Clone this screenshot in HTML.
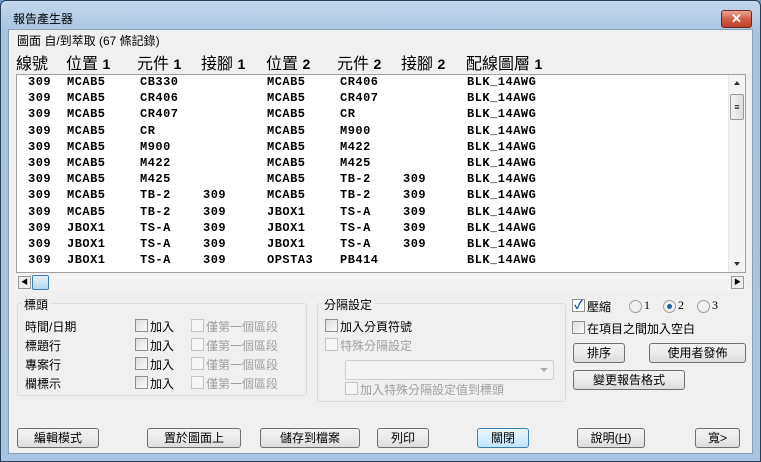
<!DOCTYPE html><html><head><meta charset="utf-8"><style>
*{margin:0;padding:0;box-sizing:border-box}
body{width:761px;height:462px;overflow:hidden;background:#6e9cc9;font-family:"Liberation Sans","Noto Sans CJK TC",sans-serif;font-size:12px;color:#000;position:relative}
.win{position:absolute;left:0;top:0;width:761px;height:462px;border:1px solid #2b3e55;border-radius:6px 6px 0 0;background:linear-gradient(#c4d7ea,#a9c4e0 30px,#aac5e1)}
.client{position:absolute;left:8px;top:29px;width:745px;height:425px;background:#f0f0f0;border:1px solid #8aa1b8}
.a{position:absolute;white-space:nowrap}
.close{position:absolute;left:720px;top:9px;width:31px;height:18px;border:1px solid #6b2a20;border-radius:3px;background:linear-gradient(#e8a593,#d0604a 50%,#c2402a);color:#fff;font-weight:bold;text-align:center;font-size:13px;line-height:16px}
.list{position:absolute;left:16px;top:74px;width:730px;height:199px;background:#fff;border:1px solid #a0a0a0}
.row{position:absolute;font-family:"Liberation Mono",monospace;font-weight:bold;font-size:12px;letter-spacing:0.5px}
.btn{position:absolute;height:20px;border:1px solid #707070;border-radius:3px;background:linear-gradient(#f2f2f2,#ebebeb 50%,#dcdcdc);text-align:center;line-height:18px;font-size:12px}
.cb{position:absolute;width:13px;height:13px;border:1px solid #8e8f8f;background:linear-gradient(135deg,#ddd,#fafafa)}
.cbd{border-color:#c5c5c5;background:#f6f6f6}
.grp{position:absolute;border:1px solid #d5dfe5;border-radius:3px}
.dis{color:#a0a0a0}
.hdr{position:absolute;font-size:16px;top:50px}
.rad{position:absolute;width:13px;height:13px;border-radius:50%;border:1px solid #a0a0a0;background:#f0f0f0}
</style></head><body><div class="win">
<div class="a" style="left:12px;top:9px;font-size:12px">報告產生器</div>
<div class="close">✕</div>
</div>
<div class="client"></div>
<div class="a" style="left:17px;top:32px">圖面 自/到萃取 (67 條記錄)</div>
<div class="hdr" style="left:16px">線號</div>
<div class="hdr" style="left:66px">位置 <b style="font-size:14px">1</b></div>
<div class="hdr" style="left:137px">元件 <b style="font-size:14px">1</b></div>
<div class="hdr" style="left:201px">接腳 <b style="font-size:14px">1</b></div>
<div class="hdr" style="left:266px">位置 <b style="font-size:14px">2</b></div>
<div class="hdr" style="left:337px">元件 <b style="font-size:14px">2</b></div>
<div class="hdr" style="left:401px">接腳 <b style="font-size:14px">2</b></div>
<div class="hdr" style="left:466px">配線圖層 <b style="font-size:14px">1</b></div>
<div class="list">
<div style="position:absolute;right:0;top:0;width:17px;height:197px;background:#f3f3f3;border-left:1px solid #e8e8e8">
<div style="position:absolute;left:5px;top:6px;border:3px solid transparent;border-bottom:4px solid #333;border-top:0"></div>
<div style="position:absolute;left:1px;top:19px;width:14px;height:26px;border:1px solid #999;border-radius:2px;background:linear-gradient(90deg,#f2f2f2,#ddd);font-size:9px;text-align:center;line-height:24px">≡</div>
<div style="position:absolute;left:5px;bottom:6px;border:3px solid transparent;border-top:4px solid #333;border-bottom:0"></div>
</div>
</div>
<div id="rows"></div>
<div style="position:absolute;left:16px;top:274px;width:730px;height:17px;background:#f3f3f3">
<div style="position:absolute;left:2px;top:2px;width:13px;height:13px;border:1px solid #999;background:#eee;font-size:7px;line-height:11px;text-align:center">◀</div>
<div style="position:absolute;left:16px;top:1px;width:17px;height:15px;border:1px solid #3c7fb1;border-radius:2px;background:linear-gradient(#e4f1fb,#b7d8f1)"></div>
<div style="position:absolute;right:2px;top:2px;width:13px;height:13px;border:1px solid #999;background:#eee;font-size:7px;line-height:11px;text-align:center">▶</div>
</div>
<div class="grp" style="left:17px;top:303px;width:290px;height:93px"></div>
<div class="a" style="left:22px;top:296px;background:#f0f0f0;padding:0 2px">標頭</div>
<div class="a" style="left:25px;top:318px">時間/日期</div>
<div class="a" style="left:25px;top:337px">標題行</div>
<div class="a" style="left:25px;top:356px">專案行</div>
<div class="a" style="left:25px;top:375px">欄標示</div>
<div class="cb" style="left:135px;top:319px"></div><div class="a" style="left:150px;top:318px">加入</div><div class="cb cbd" style="left:191px;top:319px"></div><div class="a dis" style="left:206px;top:318px">僅第一個區段</div>
<div class="cb" style="left:135px;top:338px"></div><div class="a" style="left:150px;top:337px">加入</div><div class="cb cbd" style="left:191px;top:338px"></div><div class="a dis" style="left:206px;top:337px">僅第一個區段</div>
<div class="cb" style="left:135px;top:357px"></div><div class="a" style="left:150px;top:356px">加入</div><div class="cb cbd" style="left:191px;top:357px"></div><div class="a dis" style="left:206px;top:356px">僅第一個區段</div>
<div class="cb" style="left:135px;top:376px"></div><div class="a" style="left:150px;top:375px">加入</div><div class="cb cbd" style="left:191px;top:376px"></div><div class="a dis" style="left:206px;top:375px">僅第一個區段</div>
<div class="grp" style="left:317px;top:303px;width:249px;height:99px"></div>
<div class="a" style="left:322px;top:296px;background:#f0f0f0;padding:0 2px">分隔設定</div>
<div class="cb" style="left:325px;top:319px"></div><div class="a" style="left:340px;top:318px">加入分頁符號</div>
<div class="cb cbd" style="left:325px;top:338px"></div><div class="a dis" style="left:340px;top:337px">特殊分隔設定</div>
<div style="position:absolute;left:345px;top:360px;width:209px;height:20px;border:1px solid #d0d0d0;border-radius:2px;background:#f4f4f4"><div style="position:absolute;right:5px;top:7px;border:4px solid transparent;border-top:4px solid #aaa;border-bottom:0"></div></div>
<div class="cb cbd" style="left:345px;top:382px"></div><div class="a dis" style="left:360px;top:381px">加入特殊分隔設定值到標頭</div>
<div class="cb" style="left:572px;top:299px;background:#fff;color:#1e55a8;font-size:12px;line-height:11px;text-align:center;font-weight:bold">✓</div><div class="a" style="left:587px;top:298px">壓縮</div>
<div class="rad" style="left:629px;top:300px"></div><div class="a" style="left:644px;top:298px;font-family:'Liberation Serif',serif">1</div>
<div class="rad" style="left:663px;top:300px"><div style="position:absolute;left:3px;top:3px;width:5px;height:5px;border-radius:50%;background:#1b5fa8"></div></div><div class="a" style="left:678px;top:298px;font-family:'Liberation Serif',serif">2</div>
<div class="rad" style="left:697px;top:300px"></div><div class="a" style="left:712px;top:298px;font-family:'Liberation Serif',serif">3</div>
<div class="cb" style="left:572px;top:321px"></div><div class="a" style="left:587px;top:320px">在項目之間加入空白</div>
<div class="btn" style="left:573px;top:343px;width:52px">排序</div>
<div class="btn" style="left:649px;top:343px;width:97px">使用者發佈</div>
<div class="btn" style="left:573px;top:370px;width:112px">變更報告格式</div>
<div class="btn" style="left:17px;top:428px;width:82px">編輯模式</div>
<div class="btn" style="left:147px;top:428px;width:94px">置於圖面上</div>
<div class="btn" style="left:260px;top:428px;width:100px">儲存到檔案</div>
<div class="btn" style="left:377px;top:428px;width:52px">列印</div>
<div class="btn" style="left:477px;top:428px;width:52px;border-color:#3c7fb1;background:linear-gradient(#eaf6fd,#bee6fd)">關閉</div>
<div class="btn" style="left:577px;top:428px;width:68px">說明(<u>H</u>)</div>
<div class="btn" style="left:695px;top:428px;width:45px">寬&gt;</div>
<script>
var d=[["309","MCAB5","CB330","","MCAB5","CR406",""],["309","MCAB5","CR406","","MCAB5","CR407",""],["309","MCAB5","CR407","","MCAB5","CR",""],["309","MCAB5","CR","","MCAB5","M900",""],["309","MCAB5","M900","","MCAB5","M422",""],["309","MCAB5","M422","","MCAB5","M425",""],["309","MCAB5","M425","","MCAB5","TB-2","309"],["309","MCAB5","TB-2","309","MCAB5","TB-2","309"],["309","MCAB5","TB-2","309","JBOX1","TS-A","309"],["309","JBOX1","TS-A","309","JBOX1","TS-A","309"],["309","JBOX1","TS-A","309","JBOX1","TS-A","309"],["309","JBOX1","TS-A","309","OPSTA3","PB414",""]];
var xs=[28,67,140,203,267,340,403,467],h="";
d.forEach(function(r,i){r.concat(["BLK_14AWG"]).forEach(function(c,j){h+='<div class="row" style="left:'+xs[j]+'px;top:'+(75+i*16.2)+'px">'+c+'</div>'})});
document.getElementById("rows").innerHTML=h;
</script>
</body></html>
